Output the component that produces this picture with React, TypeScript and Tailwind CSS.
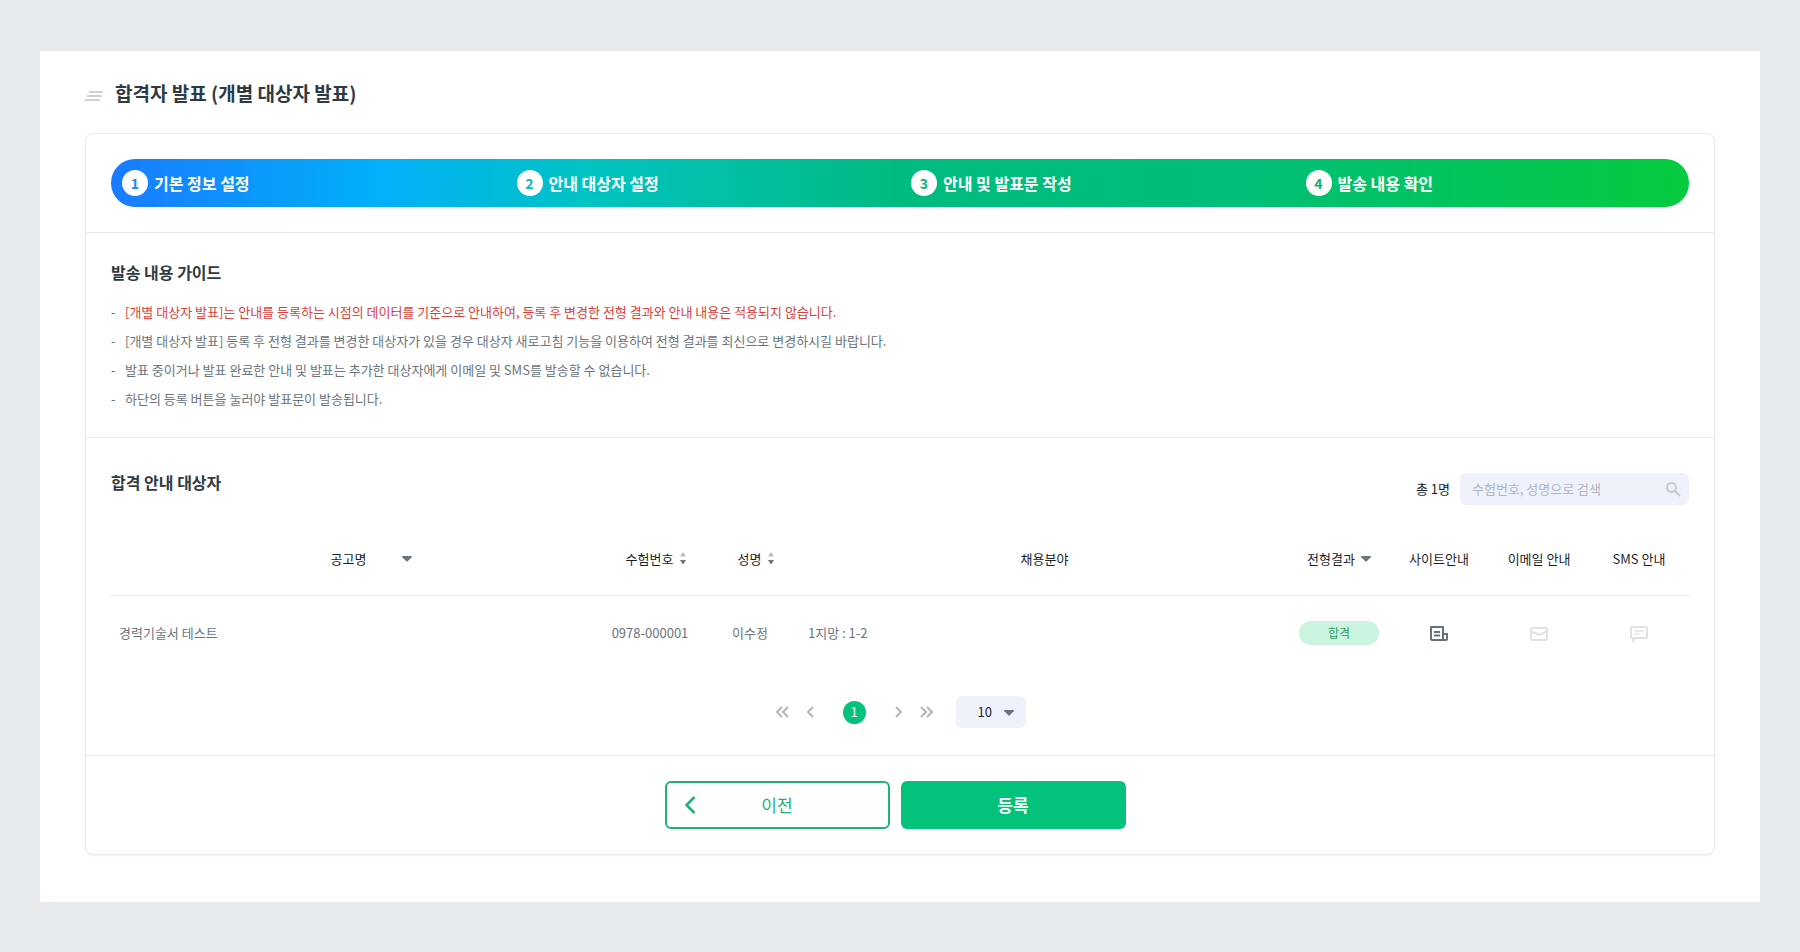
import { useState } from 'react'

interface Applicant {
  notice: string
  examNo: string
  name: string
  field: string
  result: string
}

const STEPS = [
  { label: '기본 정보 설정', color: 'text-[#1a8cf0]' },
  { label: '안내 대상자 설정', color: 'text-[#0fb5c4]' },
  { label: '안내 및 발표문 작성', color: 'text-[#12b184]' },
  { label: '발송 내용 확인', color: 'text-[#12b06e]' },
]

const GUIDES = [
  '[개별 대상자 발표]는 안내를 등록하는 시점의 데이터를 기준으로 안내하여, 등록 후 변경한 전형 결과와 안내 내용은 적용되지 않습니다.',
  '[개별 대상자 발표] 등록 후 전형 결과를 변경한 대상자가 있을 경우 대상자 새로고침 기능을 이용하여 전형 결과를 최신으로 변경하시길 바랍니다.',
  '발표 중이거나 발표 완료한 안내 및 발표는 추가한 대상자에게 이메일 및 SMS를 발송할 수 없습니다.',
  '하단의 등록 버튼을 눌러야 발표문이 발송됩니다.',
]

const APPLICANTS: Applicant[] = [
  { notice: '경력기술서 테스트', examNo: '0978-000001', name: '이수정', field: '1지망 : 1-2', result: '합격' },
]

function Caret() {
  return (
    <svg width="10" height="6" viewBox="0 0 10 6" fill="#6b757d" className="mt-px" aria-hidden="true">
      <path d="M.8 0h8.400q1.200.2.500 1.200L5.700 5.300q-.7.7-1.400 0L.3 1.200Q-.4.2.8 0Z" />
    </svg>
  )
}

function SortIcon() {
  return (
    <svg width="6" height="13" viewBox="0 0 6 13" className="mt-px" aria-hidden="true">
      <path d="M3 0 6 4.500H0Z" fill="#b8bcc0" />
      <path d="M0 8h6l-3 4.500Z" fill="#6b757d" />
    </svg>
  )
}

function Chevron({ double, flip }: { double?: boolean; flip?: boolean }) {
  return (
    <svg
      width={double ? 14 : 8}
      height="12"
      viewBox={double ? '0 0 14 12' : '0 0 8 12'}
      fill="none"
      stroke="#b0b5ba"
      strokeWidth="2"
      className={flip ? 'rotate-180' : ''}
      aria-hidden="true"
    >
      <path d="M7 1 2 6l5 5" />
      {double && <path d="M13 1 8 6l5 5" />}
    </svg>
  )
}

function SiteIcon() {
  return (
    <svg width="18" height="16" viewBox="0 0 18 16" fill="none" stroke="#66717b" strokeWidth="2" aria-hidden="true">
      <path d="M15 14H2a1 1 0 0 1-1-1V1h12v13" strokeLinejoin="round" />
      <path d="M13 8h4v5a1 1 0 0 1-1 1h-2" />
      <path d="M4 6h6M4 9.5h6" strokeWidth="1.8" />
    </svg>
  )
}

function MailIcon() {
  return (
    <svg width="18" height="14" viewBox="0 0 18 14" fill="none" stroke="#dfe2e5" strokeWidth="2" aria-hidden="true">
      <rect x="1" y="1" width="16" height="12" rx="1" />
      <path d="m1.500 4.500 6.500 3q1 .5 2 0l6.500-3" />
    </svg>
  )
}

function SmsIcon() {
  return (
    <svg width="18" height="17" viewBox="0 0 18 17" fill="none" stroke="#dfe2e5" strokeWidth="2" aria-hidden="true">
      <path d="M2 1h14a1 1 0 0 1 1 1v9a1 1 0 0 1-1 1H5.500L3 14.500V12H2a1 1 0 0 1-1-1V2a1 1 0 0 1 1-1Z" />
      <path d="M4.500 5h9M4.500 8h5" strokeWidth="1.600" />
    </svg>
  )
}

export default function App() {
  const [keyword, setKeyword] = useState('')
  const [pageSize, setPageSize] = useState('10')

  const rows = APPLICANTS.filter(a => a.examNo.includes(keyword) || a.name.includes(keyword))

  return (
    <div className="min-h-screen bg-[#e8ebee] px-10 pt-[51px] pb-[50px] font-['Noto_Sans_CJK_KR',sans-serif] text-[13px] text-[#6b757d]">
      <main className="bg-white px-[45px] pt-7 pb-[47px]">
        <div className="mb-[26px] flex h-7 items-center gap-3">
          <svg width="18" height="10" viewBox="0 0 18 10" stroke="#cfd1d3" strokeWidth="1.8" className="mt-1.5" aria-hidden="true">
            <path d="M4 1h15M2 5h15M0 9h15" />
          </svg>
          <h1 className="text-[19px] font-bold text-[#2f3a42]">합격자 발표 (개별 대상자 발표)</h1>
        </div>

        <div className="rounded-lg border border-[#e6e8eb] shadow-xs">
          {/* 진행 단계 */}
          <div className="border-b border-[#e6e8eb] px-[25px] py-[25px]">
            <ol className="grid h-12 grid-cols-4 items-center rounded-full bg-[linear-gradient(90deg,#1a7bff_0%,#00b0fa_17%,#00c3c3_30%,#00bb80_50%,#00bf78_72%,#05cb3e_100%)]">
              {STEPS.map((step, idx) => (
                <li key={step.label} className="flex items-center gap-1.5 pl-[11px]">
                  <span className={`flex size-[26px] items-center justify-center rounded-full bg-white text-sm font-bold ${step.color}`}>
                    {idx + 1}
                  </span>
                  <span className="text-base font-bold text-white">{step.label}</span>
                </li>
              ))}
            </ol>
          </div>

          {/* 가이드 */}
          <section className="border-b border-[#e6e8eb] px-[25px] pt-[30px] pb-6">
            <h2 className="mb-4 text-base leading-[18px] font-bold text-[#2f3a42]">발송 내용 가이드</h2>
            <ul>
              {GUIDES.map((text, idx) => (
                <li key={idx} className={`flex leading-[29px] ${idx === 0 ? 'text-[#d9423c]' : ''}`}>
                  <span className="w-[14px]">-</span>
                  <span>{text}</span>
                </li>
              ))}
            </ul>
          </section>

          {/* 대상자 목록 */}
          <section className="border-b border-[#e6e8eb] px-[25px] pt-[35px] pb-[27px]">
            <div className="flex items-start justify-between">
              <h2 className="text-base leading-[18px] font-bold text-[#2f3a42]">합격 안내 대상자</h2>
              <div className="flex items-center gap-2.5">
                <span className="text-[#1b1f2a]">총 1명</span>
                <label className="flex h-8 w-[229px] items-center rounded-md bg-[#eff2fa] pr-2 pl-3">
                  <input
                    type="text"
                    aria-label="수험번호, 성명으로 검색"
                    placeholder="수험번호, 성명으로 검색"
                    value={keyword}
                    onChange={e => setKeyword(e.target.value)}
                    className="min-w-0 flex-1 bg-transparent text-[#263238] outline-none placeholder:text-[#b0b6c3]"
                  />
                  <svg width="15" height="15" viewBox="0 0 15 15" fill="none" stroke="#c6cad0" strokeWidth="2" aria-hidden="true">
                    <circle cx="5.5" cy="5.5" r="4.5" />
                    <path d="m9 9 5 5" />
                  </svg>
                </label>
              </div>
            </div>

            <table className="mt-[17px] w-full table-fixed">
              <thead>
                <tr className="h-[73px] border-b border-[#eeeff1] text-[#1b1f2a]">
                  <th className="font-normal">
                    <button type="button" className="inline-flex items-center gap-9 pl-8">공고명<Caret /></button>
                  </th>
                  <th className="w-[100px] font-normal">
                    <button type="button" className="inline-flex items-center gap-[7px] pl-3">수험번호<SortIcon /></button>
                  </th>
                  <th className="w-[100px] font-normal">
                    <button type="button" className="inline-flex items-center gap-[7px] pl-3">성명<SortIcon /></button>
                  </th>
                  <th className="font-normal">채용분야</th>
                  <th className="w-[100px] font-normal">
                    <button type="button" className="inline-flex items-center gap-1.5">전형결과<Caret /></button>
                  </th>
                  <th className="w-[100px] font-normal">사이트안내</th>
                  <th className="w-[100px] font-normal">이메일 안내</th>
                  <th className="w-[100px] font-normal">SMS 안내</th>
                </tr>
              </thead>
              <tbody>
                {rows.map(row => (
                  <tr key={row.examNo} className="h-[75px] text-center">
                    <td className="px-2 text-left">{row.notice}</td>
                    <td>{row.examNo}</td>
                    <td>{row.name}</td>
                    <td className="px-2 text-left">{row.field}</td>
                    <td>
                      <span className="mx-auto block h-6 w-20 rounded-full bg-[#caf4df] text-xs leading-6 text-[#2f9e62]">{row.result}</span>
                    </td>
                    <td>
                      <button type="button" aria-label="사이트안내 보기" className="align-middle"><SiteIcon /></button>
                    </td>
                    <td>
                      <button type="button" aria-label="이메일 안내 보기" className="align-middle" disabled><MailIcon /></button>
                    </td>
                    <td>
                      <button type="button" aria-label="SMS 안내 보기" className="align-middle" disabled><SmsIcon /></button>
                    </td>
                  </tr>
                ))}
              </tbody>
            </table>

            <nav aria-label="페이지" className="mt-[26px] flex items-center justify-center">
              <button type="button" aria-label="첫 페이지"><Chevron double /></button>
              <button type="button" aria-label="이전 페이지" className="ml-[17px]"><Chevron /></button>
              <button type="button" aria-current="page" className="mx-[29px] size-[23px] rounded-full bg-[#02c27c] text-white">1</button>
              <button type="button" aria-label="다음 페이지"><Chevron flip /></button>
              <button type="button" aria-label="마지막 페이지" className="ml-[17px]"><Chevron double flip /></button>
              <div className="relative ml-[22px]">
                <select
                  aria-label="페이지당 개수"
                  value={pageSize}
                  onChange={e => setPageSize(e.target.value)}
                  className="h-8 w-[70px] appearance-none rounded-md bg-[#eff2fa] pl-[22px] text-[#1b1f2a] outline-none"
                >
                  <option>10</option>
                  <option>20</option>
                  <option>50</option>
                </select>
                <span className="pointer-events-none absolute inset-y-0 right-3 flex items-center"><Caret /></span>
              </div>
            </nav>
          </section>

          <div className="flex justify-center gap-[11px] py-[25px] pr-[10px]">
            <button type="button" className="relative h-12 w-[225px] rounded-md border-2 border-[#1fb17c] text-[17px] text-[#1fb17c]">
              <svg width="12" height="18" viewBox="0 0 12 18" fill="none" stroke="#1fb17c" strokeWidth="2.5" className="absolute inset-y-0 left-[17px] my-auto" aria-hidden="true">
                <path d="m10.500 1-8 8 8 8" />
              </svg>
              이전
            </button>
            <button type="button" className="h-12 w-[225px] rounded-md bg-[#02c27c] text-[17px] font-bold text-white">등록</button>
          </div>
        </div>
      </main>
    </div>
  )
}
